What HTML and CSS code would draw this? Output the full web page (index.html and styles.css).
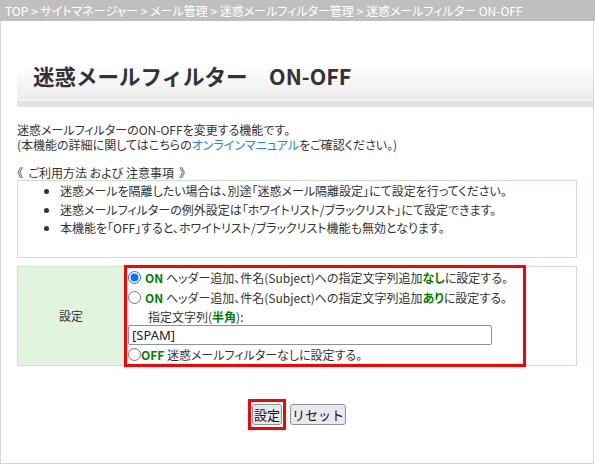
FILE: index.html
```html
<!DOCTYPE html>
<html lang="ja">
<head>
<meta charset="utf-8">
<title>迷惑メールフィルター ON-OFF</title>
<link rel="stylesheet" href="styles.css">
</head>
<body>
<div class="crumb">TOP &gt; サイトマネージャー &gt; メール管理 &gt; 迷惑メールフィルター管理 &gt; 迷惑メールフィルター ON-OFF</div>
<div class="frame">
  <h1 class="title">迷惑メールフィルター　ON-OFF</h1>
  <div class="content">
    <div class="intro">
      <p class="line">迷惑メールフィルターのON-OFFを変更する機能です。</p>
      <p class="line">(本機能の詳細に関してはこちらの<a class="link" href="#">オンラインマニュアル</a>をご確認ください。)</p>
    </div>
    <p class="notes-head">《&nbsp; ご利用方法 および 注意事項 &nbsp;》</p>
    <div class="notes">
      <ul class="note-list">
        <li>迷惑メールを隔離したい場合は、別途「迷惑メール隔離設定」にて設定を行ってください。</li>
        <li>迷惑メールフィルターの例外設定は「ホワイトリスト/ブラックリスト」にて設定できます。</li>
        <li>本機能を「OFF」すると、ホワイトリスト/ブラックリスト機能も無効となります。</li>
      </ul>
    </div>
    <div class="settings">
      <div class="label">設定</div>
      <div class="value">
        <div class="highlight">
          <label class="row"><input class="radio" type="radio" name="f" checked><span><b class="on">ON</b> ヘッダー追加、件名(Subject)への指定文字列追加<b class="on">なし</b>に設定する。</span></label>
          <label class="row"><input class="radio" type="radio" name="f"><span><b class="on">ON</b> ヘッダー追加、件名(Subject)への指定文字列追加<b class="on">あり</b>に設定する。</span></label>
          <div class="row sub"><span>指定文字列(<b class="on">半角</b>):</span></div>
          <input class="text" type="text" value="[SPAM]">
          <label class="row last"><input class="radio tight" type="radio" name="f"><span><b class="on">OFF</b> 迷惑メールフィルターなしに設定する。</span></label>
        </div>
      </div>
    </div>
    <div class="actions">
      <span class="mark"><button class="btn" type="button">設定</button></span>
      <button class="btn" type="button">リセット</button>
    </div>
  </div>
</div>
</body>
</html>
```
FILE: styles.css
```css
html, body {
  margin: 0;
  padding: 0;
  background: #fff;
}
body {
  font-family: "Noto Sans CJK JP", "Noto Sans", sans-serif;
  font-size: 12px;
  color: #333;
  font-feature-settings: "palt";
}
.crumb {
  height: 21px;
  line-height: 21px;
  background: #bfbfbf;
  color: #fff;
  padding-left: 5px;
  white-space: nowrap;
  overflow: hidden;
}
.frame {
  width: 594px;
  height: 443px;
  box-sizing: border-box;
  border: 1px solid #d6d6d6;
  border-top: none;
}
.title {
  margin: 0 0 0 16px;
  padding: 40px 0 10px 16px;
  font-size: 21.5px;
  line-height: 30px;
  font-weight: bold;
  color: #333;
  font-feature-settings: normal;
  background: linear-gradient(#fff 0%, #fff 55%, #ececec 100%);
  border-bottom: 6px solid #e2e2e2;
  box-shadow: inset 0 -1px 0 #f7f7f7;
}
.content {
  margin: 0 16px;
}
.intro {
  margin-top: 15px;
}
.line {
  margin: 0;
  height: 15px;
  line-height: 15px;
}
.link {
  color: #1a88e0;
  text-decoration: none;
}
.notes-head {
  margin: 13px 0 0;
  line-height: 15px;
}
.notes {
  border: 1px solid #c6e6c6;
  padding: 1px 0 19px;
}
.note-list {
  margin: 0;
  padding-left: 42px;
  line-height: 18.5px;
}
.settings {
  display: flex;
  margin-top: 8px;
  border: 1px solid #c6e6c6;
}
.label {
  width: 106px;
  background: #e0f4e0;
  border-right: 1px solid #c6e6c6;
  display: flex;
  align-items: center;
  justify-content: center;
}
.value {
  flex: 1;
}
.highlight {
  width: 396px;
  margin: -2px 0 -2px -1px;
  border: 3px solid #ff0000;
  display: flex;
  flex-direction: column;
  white-space: nowrap;
}
.row {
  display: flex;
  align-items: center;
  height: 20px;
}
.row.last {
  height: 19px;
}
.sub {
  height: 17px;
  padding-left: 21px;
}
.radio {
  width: 13px;
  height: 13px;
  margin: 0 4px 0 1px;
}
.radio.tight {
  margin-right: 0;
}
.on {
  color: #008000;
  font-weight: bold;
}
.text {
  width: 364px;
  height: 20px;
  box-sizing: border-box;
  margin: 0 0 0 1px;
  padding: 0 3px;
  border: 1px solid #8f8f9d;
  border-radius: 2px;
  font-family: "Noto Sans", "Noto Sans CJK JP", sans-serif;
  font-size: 13px;
  color: #222;
}
.actions {
  display: flex;
  justify-content: center;
  align-items: center;
  gap: 4px;
  margin-top: 33px;
}
.mark {
  display: inline-flex;
  padding: 2px 1px;
  border: 3px solid #ff0000;
}
.btn {
  height: 21px;
  padding: 0 1px;
  font-family: "Noto Sans CJK JP", sans-serif;
  font-size: 13px;
  line-height: 19px;
  color: #111;
  background: #e9e9ed;
  border: 1px solid #8f8f9d;
  border-radius: 3px;
}
```
